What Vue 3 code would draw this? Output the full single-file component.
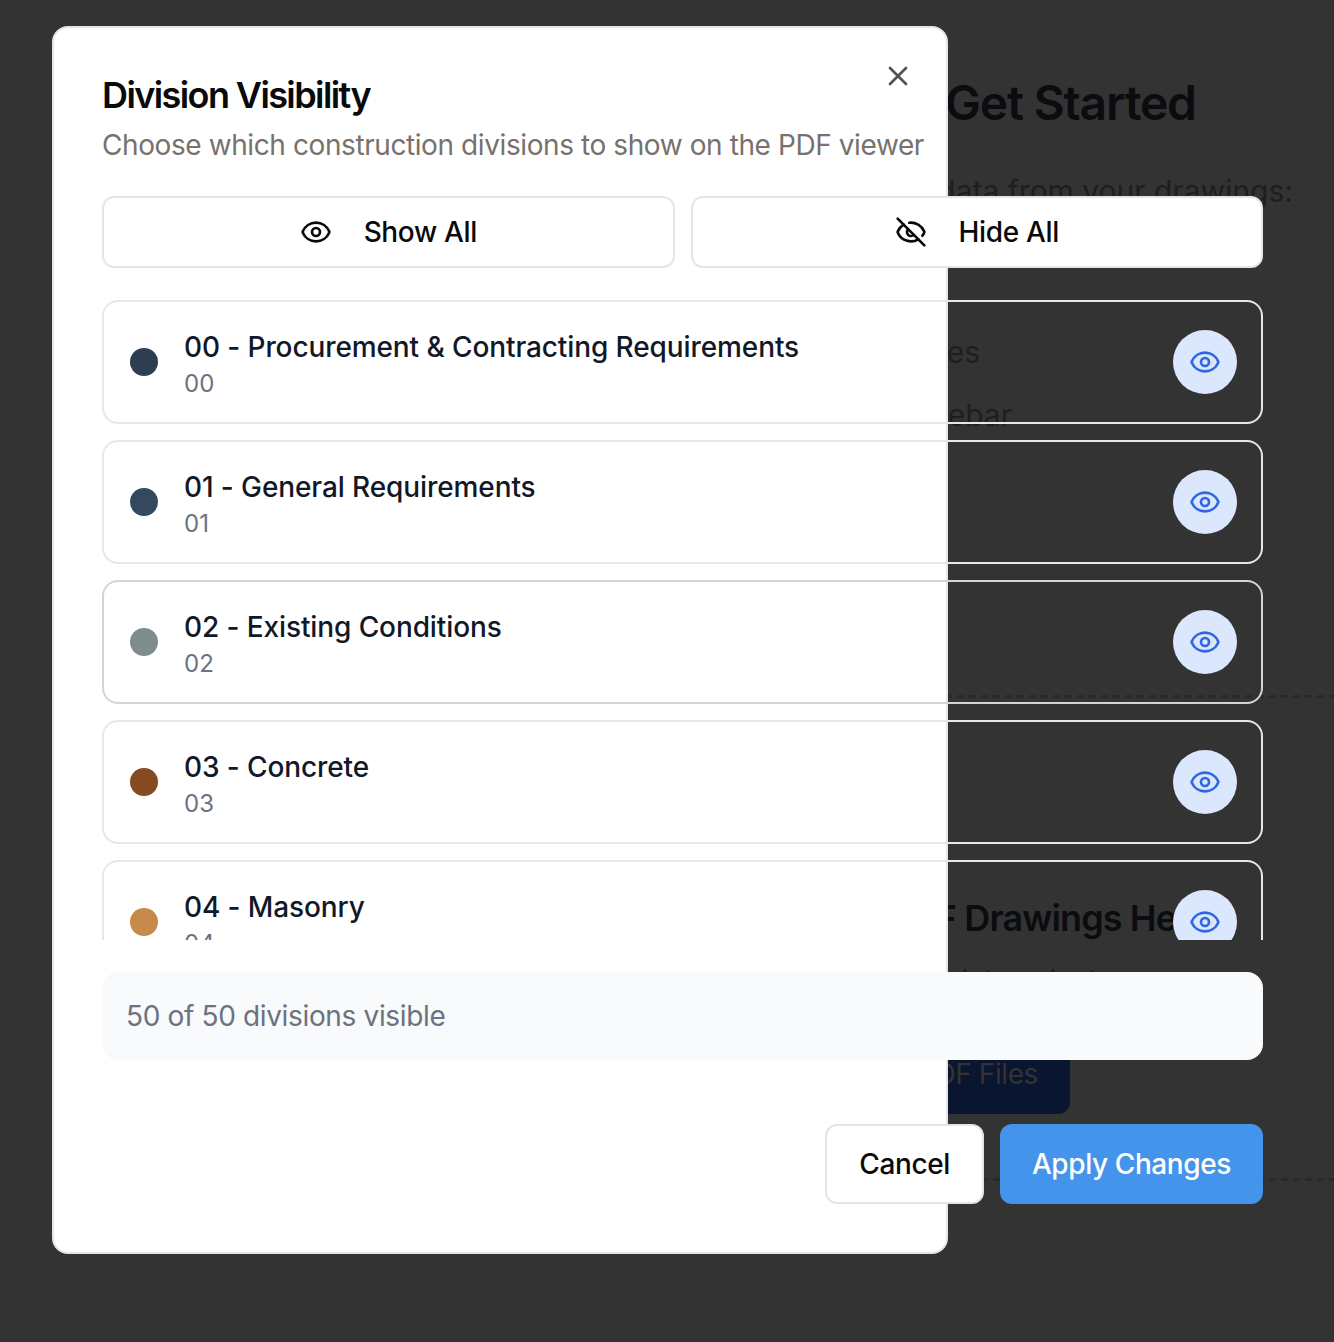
<script setup>
const divisions = [
  { code: '00', name: 'Procurement & Contracting Requirements', color: '#2c3e50' },
  { code: '01', name: 'General Requirements', color: '#34495e' },
  { code: '02', name: 'Existing Conditions', color: '#7f8c8d', active: true },
  { code: '03', name: 'Concrete', color: '#854a1f' },
  { code: '04', name: 'Masonry', color: '#c68a4a' },
]
</script>

<template>
  <div class="screen">
    <main class="page">
      <h1 class="page-title">Get Started</h1>
      <p class="page-lead">Extract data from your drawings:</p>
      <p class="page-item first">Upload your PDF files</p>
      <p class="page-item second">Open them from the sidebar</p>
      <div class="rule rule-one"></div>
      <h2 class="drop-title">Drop PDF Drawings Here</h2>
      <p class="drop-hint">Drag and drop your files, or click to select</p>
      <div class="browse">Browse PDF Files</div>
      <div class="rule rule-two"></div>
    </main>

    <section class="modal">
      <button class="close" aria-label="Close">
        <svg viewBox="0 0 24 24" width="32" height="32" fill="none" stroke="currentColor" stroke-width="2" stroke-linecap="round" stroke-linejoin="round">
          <path d="M18 6 6 18" />
          <path d="m6 6 12 12" />
        </svg>
      </button>
      <header class="head">
        <h2 class="title">Division Visibility</h2>
        <p class="subtitle">Choose which construction divisions to show on the PDF viewer</p>
      </header>

      <div class="body">
        <div class="bulk">
          <button class="bulk-btn">
            <svg class="icon" viewBox="0 0 24 24" fill="none" stroke="currentColor" stroke-width="2" stroke-linecap="round" stroke-linejoin="round">
              <path d="M2.062 12.348a1 1 0 0 1 0-.696 10.75 10.75 0 0 1 19.876 0 1 1 0 0 1 0 .696 10.75 10.75 0 0 1-19.876 0" />
              <circle cx="12" cy="12" r="3" />
            </svg>
            <span>Show All</span>
          </button>
          <button class="bulk-btn">
            <svg class="icon" viewBox="0 0 24 24" fill="none" stroke="currentColor" stroke-width="2" stroke-linecap="round" stroke-linejoin="round">
              <path d="M10.733 5.076a10.744 10.744 0 0 1 11.205 6.575 1 1 0 0 1 0 .696 10.747 10.747 0 0 1-1.444 2.49" />
              <path d="M14.084 14.158a3 3 0 0 1-4.242-4.242" />
              <path d="M17.479 17.499a10.75 10.75 0 0 1-15.417-5.151 1 1 0 0 1 0-.696 10.75 10.75 0 0 1 4.446-5.143" />
              <path d="m2 2 20 20" />
            </svg>
            <span>Hide All</span>
          </button>
        </div>

        <div class="list">
          <article v-for="d in divisions" :key="d.code" class="card" :class="{ active: d.active }">
            <span class="dot" :style="{ background: d.color }"></span>
            <div class="info">
              <div class="name">{{ d.code }} - {{ d.name }}</div>
              <div class="code">{{ d.code }}</div>
            </div>
            <button class="toggle" aria-label="Toggle visibility">
              <svg class="icon" viewBox="0 0 24 24" fill="none" stroke="currentColor" stroke-width="2" stroke-linecap="round" stroke-linejoin="round">
                <path d="M2.062 12.348a1 1 0 0 1 0-.696 10.75 10.75 0 0 1 19.876 0 1 1 0 0 1 0 .696 10.75 10.75 0 0 1-19.876 0" />
                <circle cx="12" cy="12" r="3" />
              </svg>
            </button>
          </article>
        </div>

        <div class="status">50 of 50 divisions visible</div>

        <footer class="actions">
          <button class="btn cancel">Cancel</button>
          <button class="btn apply">Apply Changes</button>
        </footer>
      </div>
    </section>
  </div>
</template>

<style scoped>
.screen {
  position: relative;
  width: 1334px;
  height: 1342px;
  overflow: hidden;
  background: #333;
  font-family: Inter, "Liberation Sans", sans-serif;
}
.page {
  box-sizing: border-box;
  height: 1342px;
  padding: 75px 0 0 945px;
  color: #0b0c10;
  white-space: nowrap;
}
.page-title {
  margin: 0;
  font-size: 48px;
  line-height: 56px;
  font-weight: 600;
  letter-spacing: -1.2px;
}
.page-lead {
  margin: 38px 0 0 -400px;
  width: 748px;
  font-size: 30px;
  line-height: 44px;
  text-align: right;
  color: #1d1e22;
}
.page-item {
  margin: 0 0 0 -445px;
  font-size: 30px;
  line-height: 44px;
  text-align: right;
  color: #1d1e22;
}
.page-item.first { margin-top: 117px; width: 480px; }
.page-item.second { margin-top: 19px; width: 512px; }
.rule {
  height: 3px;
  margin-left: -300px;
  background: repeating-linear-gradient(90deg, #292929 0 7px, transparent 7px 12px);
}
.rule-one { margin-top: 258px; }
.drop-title {
  margin: 196px 0 0 -145px;
  font-size: 36px;
  line-height: 48px;
  font-weight: 600;
  letter-spacing: -0.9px;
}
.drop-hint {
  margin: 18px 0 0 -400px;
  width: 495px;
  font-size: 28px;
  line-height: 40px;
  text-align: right;
  color: #1d1e22;
}
.browse {
  box-sizing: border-box;
  width: 265px;
  height: 80px;
  margin: 34px 0 0 -140px;
  padding-right: 32px;
  border-radius: 12px;
  background: #0a1530;
  color: #333;
  font-size: 28px;
  line-height: 80px;
  letter-spacing: -0.4px;
  text-align: right;
}
.rule-two { margin-top: 64px; }

.modal {
  position: absolute;
  top: 26px;
  left: 52px;
  box-sizing: border-box;
  width: 896px;
  height: 1228px;
  padding: 48px;
  border: 2px solid #e5e5e5;
  border-radius: 16px;
  background: #fff;
}
.close {
  position: absolute;
  top: 32px;
  right: 32px;
  width: 32px;
  height: 32px;
  padding: 0;
  border: 0;
  background: none;
  color: #525252;
}
.head { width: 900px; }
.title {
  margin: 1px 0 0;
  font-size: 36px;
  line-height: 36px;
  font-weight: 600;
  letter-spacing: -1.6px;
  color: #0a0a0a;
}
.subtitle {
  margin: 12px 0 0;
  font-size: 28px;
  line-height: 40px;
  letter-spacing: -0.41px;
  color: #78716c;
  white-space: nowrap;
}
.body {
  width: 1161px;
  margin-top: 31px;
}
.bulk {
  display: grid;
  grid-template-columns: 1fr 1fr;
  gap: 16px;
}
.bulk-btn {
  display: flex;
  align-items: center;
  justify-content: center;
  gap: 32px;
  height: 72px;
  padding: 0;
  border: 2px solid #e5e5e5;
  border-radius: 12px;
  background: #fff;
  color: #0a0a0a;
  font: 500 28px Inter, sans-serif;
  letter-spacing: -0.35px;
}
.icon { display: block; width: 32px; height: 32px; }
.list {
  display: flex;
  flex-direction: column;
  gap: 16px;
  height: 640px;
  margin-top: 32px;
  overflow: hidden;
}
.card {
  display: flex;
  flex: none;
  align-items: center;
  box-sizing: border-box;
  height: 124px;
  padding: 0 24px 0 26px;
  border: 2px solid #e5e7eb;
  border-radius: 16px;
}
.card.active { border-color: #d1d5db; }
.dot {
  flex: none;
  width: 28px;
  height: 28px;
  border-radius: 50%;
}
.info {
  flex: 1;
  margin-left: 26px;
  padding-top: 3px;
}
.name {
  font-size: 28px;
  line-height: 40px;
  font-weight: 500;
  letter-spacing: -0.1px;
  color: #111827;
}
.code {
  margin-top: 1px;
  font-size: 24px;
  line-height: 32px;
  color: #6b7280;
}
.toggle {
  display: flex;
  flex: none;
  align-items: center;
  justify-content: center;
  width: 64px;
  height: 64px;
  padding: 0;
  border: 0;
  border-radius: 50%;
  background: #dbe7fc;
  color: #2f66e5;
}
.status {
  box-sizing: border-box;
  height: 88px;
  margin-top: 32px;
  padding: 24px;
  border-radius: 16px;
  background: #f9fafb;
  color: #6b7280;
  font-size: 28px;
  line-height: 40px;
  letter-spacing: -0.35px;
}
.actions {
  display: flex;
  justify-content: flex-end;
  gap: 16px;
  margin-top: 64px;
}
.btn {
  box-sizing: border-box;
  height: 80px;
  padding: 0 32px;
  border-radius: 12px;
  font: 500 28px Inter, sans-serif;
  letter-spacing: -0.4px;
}
.cancel {
  border: 2px solid #e5e5e5;
  background: #fff;
  color: #0a0a0a;
}
.apply {
  border: 0;
  background: #4494eb;
  color: #fff;
}
</style>
